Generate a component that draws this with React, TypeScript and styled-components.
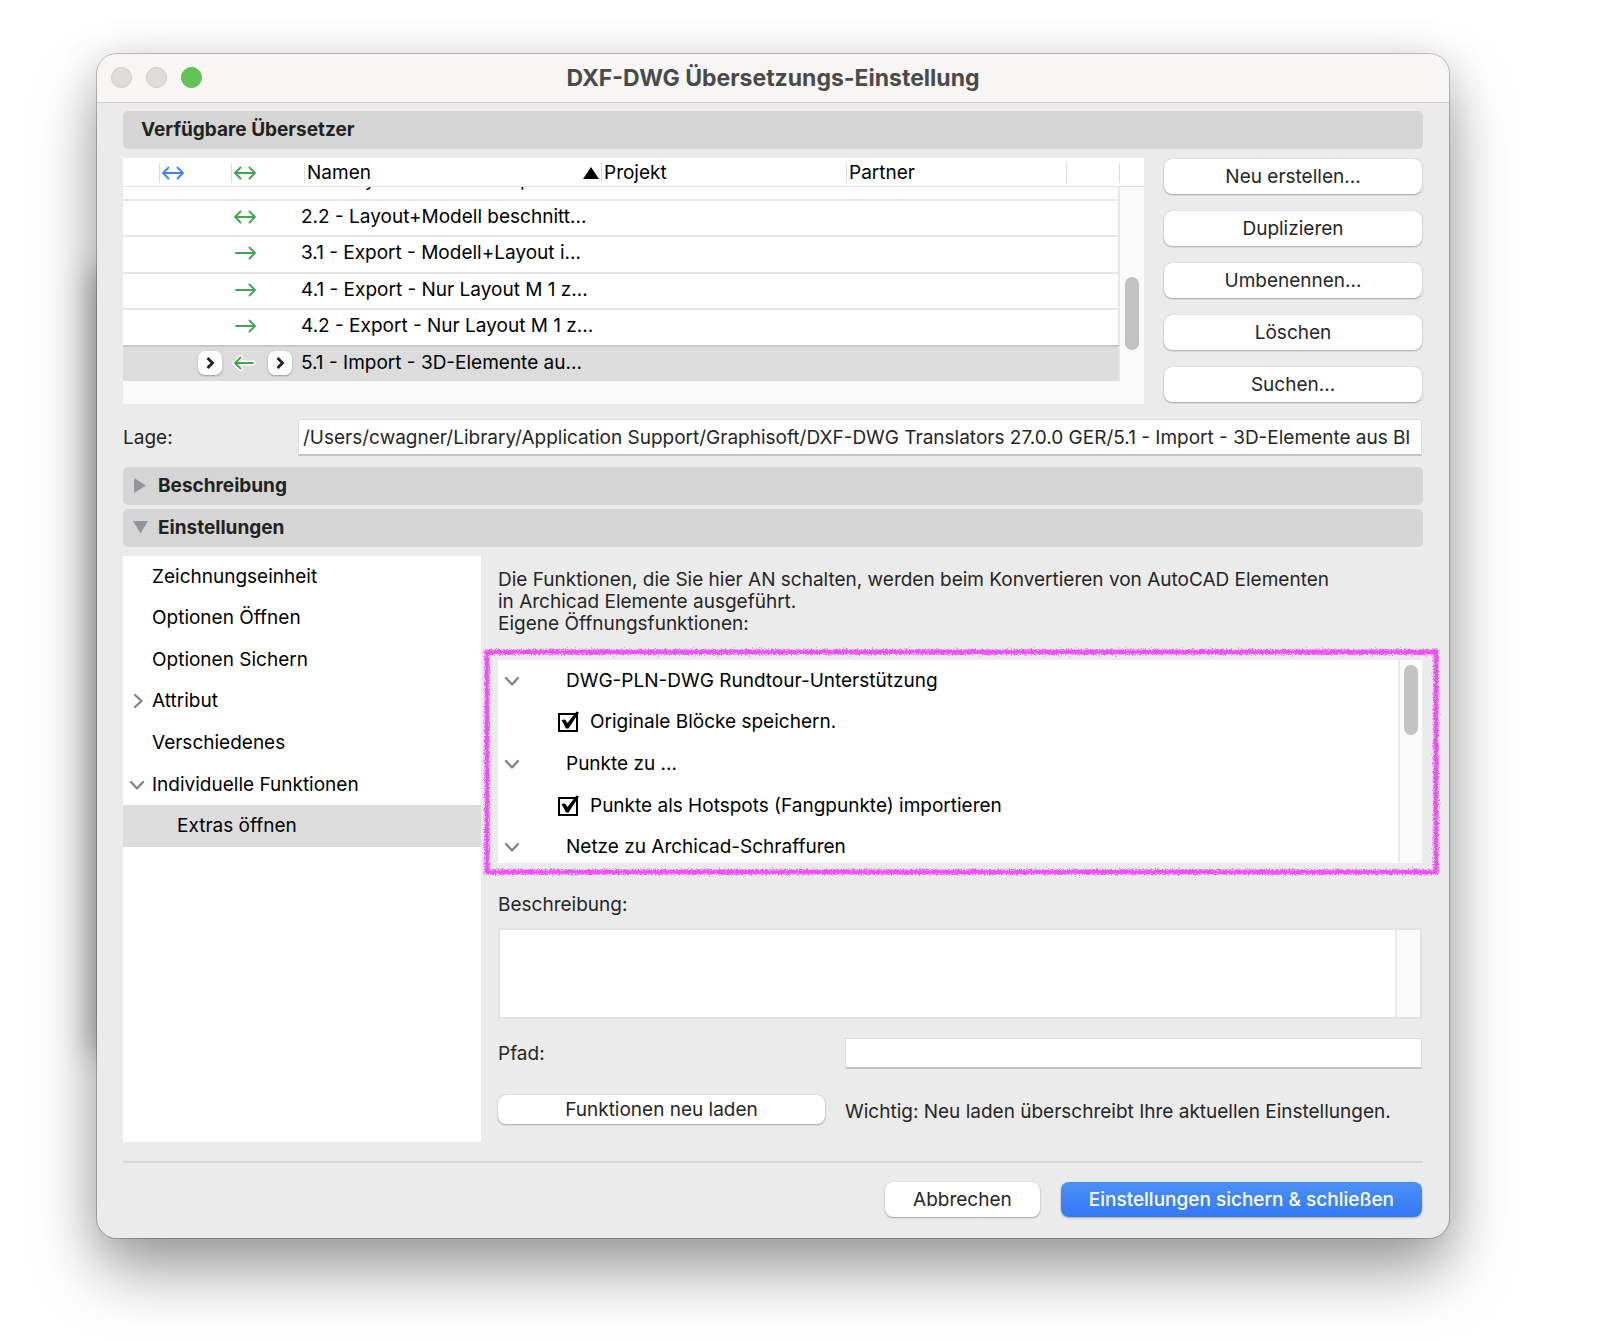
import React from "react";
import styled, { createGlobalStyle, css } from "styled-components";

const Global = createGlobalStyle`
  * { box-sizing: border-box; }
  body { margin: 0; background: #fff; font-family: Inter, "Liberation Sans", sans-serif; font-size: 19px; line-height: 22px; color: #262626; }
  button, input, textarea { font: inherit; color: inherit; margin: 0; }
  p { margin: 0; }
`;

const Desktop = styled.main`
  padding: 54px 151px 104px 97px;
`;

const Window = styled.section`
  display: flex;
  flex-direction: column;
  background: #ebebeb;
  border-radius: 20px;
  box-shadow:
    0 0 0 1px rgba(0, 0, 0, 0.22),
    0 34px 64px rgba(0, 0, 0, 0.36),
    0 4px 44px rgba(0, 0, 0, 0.12),
    -208px 16px 28px -200px rgba(0, 0, 0, 0.26);
`;

const TitleBar = styled.header`
  display: grid;
  grid-template-columns: 120px 1fr 120px;
  align-items: center;
  height: 49px;
  padding: 0 14px 1px;
  background: #f7f6f4;
  border-bottom: 1px solid #cfcfcf;
  border-radius: 20px 20px 0 0;
`;

const Lights = styled.div`
  display: flex;
  gap: 14px;
`;

const Light = styled.button<{ $on?: boolean }>`
  width: 21px;
  height: 21px;
  padding: 0;
  border-radius: 50%;
  border: 1px solid ${(p) => (p.$on ? "#58b94c" : "#cbcac9")};
  background: ${(p) => (p.$on ? "#61c554" : "#dddcdb")};
`;

const Title = styled.h1`
  margin: 0;
  font-size: 23px;
  line-height: 26px;
  font-weight: 700;
  text-align: center;
  white-space: nowrap;
  color: #4a4a4a;
`;

const Content = styled.div`
  display: flex;
  flex-direction: column;
  padding: 8px 26px 21px;
`;

const barStyle = css`
  display: flex;
  align-items: center;
  gap: 8px;
  width: 100%;
  height: 38px;
  margin: 0;
  border: 0;
  border-radius: 5px;
  background: #d5d5d5;
  font-size: 19px;
  font-weight: 700;
  color: #222;
`;

const SectionBar = styled.h2`
  ${barStyle}
  padding: 0 18px;
`;

const FoldBar = styled.button`
  ${barStyle}
  padding: 0 9px;
  text-align: left;
`;

const FoldBars = styled.div`
  display: grid;
  gap: 4px;
  margin: 11px 0 9px;
`;

const Translators = styled.div`
  display: grid;
  grid-template-columns: 1fr 258px;
  gap: 20px;
  padding-right: 1px;
  margin: 9px 0 15px;
`;

const TablePane = styled.div`
  height: 246px;
  overflow: hidden;
  display: grid;
  grid-template-columns: 1fr 24px;
  grid-template-rows: 29px 1fr;
  background: #fafafa;
`;

const Table = styled.table`
  display: block;
  grid-column: 1;
  grid-row: 1 / 3;
  color: #000;
`;

const THead = styled.thead`
  display: block;
  height: 29px;
  background: #fff;
  border-bottom: 1px solid #e4e4e4;
`;

const HeadRow = styled.tr`
  display: grid;
  grid-template-columns: 37px 72px 73px 297fr 245fr 220fr 53px;
  padding-top: 5px;
`;

const Th = styled.th`
  display: flex;
  align-items: center;
  justify-content: space-between;
  height: 20px;
  padding: 0 2px;
  border-right: 1px solid #dcdcdc;
  font-weight: 400;
  text-align: left;
`;

const TBody = styled.tbody`
  display: flex;
  flex-direction: column;
  justify-content: flex-end;
  height: 194px;
  overflow: hidden;
`;

const Row = styled.tr<{ $selected?: boolean }>`
  display: grid;
  flex: none;
  height: 18.8%;
  grid-template-columns: 75px 94px 1fr;
  border-top: 2px solid ${(p) => (p.$selected ? "#c8c8c8" : "#e6e6e6")};
  border-right: 2px solid #e6e6e6;
  background: ${(p) => (p.$selected ? "#dcdcdc" : "#fff")};
`;

const Td = styled.td<{ $icons?: boolean }>`
  display: flex;
  align-items: center;
  justify-content: ${(p) => (p.$icons ? "space-between" : "flex-start")};
  padding: 0 0 2px ${(p) => (p.$icons ? "0" : "9px")};
  white-space: nowrap;
`;

const Slot = styled.span`
  display: flex;
  width: 24px;
`;

const StepButton = styled.button`
  display: grid;
  place-items: center;
  width: 24px;
  height: 24px;
  padding: 0;
  border: 0;
  border-radius: 7px;
  background: #fff;
  box-shadow: 0 1px 2px rgba(0, 0, 0, 0.3);
  color: #222;
`;

const HeadFill = styled.div`
  background: #fff;
  border-bottom: 1px solid #e4e4e4;
`;

const ScrollTrack = styled.div<{ $top: number }>`
  display: flex;
  justify-content: center;
  align-items: flex-start;
  padding-top: ${(p) => p.$top}px;
  background: #fafafa;
`;

const Thumb = styled.span<{ $height: number }>`
  width: 14px;
  height: ${(p) => p.$height}px;
  border-radius: 7px;
  background: #c2c2c2;
`;

const Actions = styled.div`
  display: flex;
  flex-direction: column;
  gap: 17px;
  padding-top: 1px;
`;

const PushButton = styled.button<{ $primary?: boolean; $small?: boolean }>`
  height: ${(p) => (p.$small ? 29 : 35)}px;
  padding: 1px 28px 0;
  border: 0;
  border-radius: 8px;
  background: ${(p) => (p.$primary ? "linear-gradient(#4b91f8, #3378f6)" : "#fff")};
  box-shadow: 0 0 1px rgba(0, 0, 0, 0.25), 0 1px 2px rgba(0, 0, 0, 0.28);
  color: ${(p) => (p.$primary ? "#fff" : "#262626")};
  font-weight: ${(p) => (p.$primary ? 500 : 400)};
  white-space: nowrap;
`;

const LocationRow = styled.div`
  display: grid;
  grid-template-columns: 175px 1fr;
  align-items: center;
  padding-right: 1px;
`;

const TextInput = styled.input<{ $height: number }>`
  width: 100%;
  min-width: 0;
  height: ${(p) => p.$height}px;
  padding: 1px 0 0 4px;
  border: 1px solid #dedede;
  border-bottom: 2px solid #c4c4c4;
  border-radius: 0;
  background: #fff;
  outline: 0;
`;

const Settings = styled.div`
  display: grid;
  grid-template-columns: 358px 1fr;
  gap: 17px;
  padding-right: 1px;
`;

const Nav = styled.nav`
  height: 586px;
  background: #fff;
`;

const NavList = styled.ul`
  display: grid;
  grid-auto-rows: 1fr;
  height: 291px;
  margin: 0;
  padding: 0;
  list-style: none;
`;

const NavItem = styled.li<{ $selected?: boolean }>`
  display: flex;
  background: ${(p) => (p.$selected ? "#dcdcdc" : "transparent")};
`;

const NavLink = styled.a<{ $level: number }>`
  display: grid;
  grid-template-columns: 18px 1fr;
  gap: 6px;
  align-items: center;
  flex: 1;
  padding-left: ${(p) => 5 + p.$level * 25}px;
  color: #000;
  text-decoration: none;
`;

const NavFold = styled.span`
  display: flex;
`;

const Panel = styled.div`
  display: flex;
  flex-direction: column;
  align-items: stretch;
  padding-top: 13px;
`;

const Highlighted = styled.div`
  position: relative;
  margin: 25px 0 31px;
`;

const ListBox = styled.div`
  display: grid;
  grid-template-columns: 1fr 24px;
  height: 203px;
  overflow: hidden;
  background: #fff;
`;

const TrackCell = styled.div`
  display: grid;
  border-left: 2px solid #e9e9e9;
`;

const OptionList = styled.ul`
  display: grid;
  grid-auto-rows: 1fr;
  height: 208px;
  margin: 0;
  padding: 0;
  list-style: none;
  color: #000;
`;

const OptionGroup = styled.li`
  display: grid;
  grid-template-columns: 62px 1fr;
  gap: 6px;
  align-items: center;
`;

const Twist = styled.button`
  display: flex;
  justify-content: flex-start;
  padding: 0 0 0 5px;
  border: 0;
  background: none;
`;

const OptionItem = styled.li`
  display: flex;
  align-items: center;
  padding-left: 60px;
`;

const CheckLabel = styled.label`
  display: grid;
  grid-template-columns: 20px 1fr;
  gap: 12px;
  align-items: center;
`;

const CheckBox = styled.span`
  display: grid;
  height: 22px;
  & > * { grid-area: 1 / 1; }
`;

const CheckInput = styled.input`
  appearance: none;
  width: 20px;
  height: 22px;
`;

const CheckMark = styled.svg`
  pointer-events: none;
  overflow: visible;
  & path { visibility: hidden; }
  input:checked + & path { visibility: visible; }
`;

const Marker = styled.svg`
  position: absolute;
  left: -17px;
  top: -14px;
  width: calc(100% + 33px);
  height: calc(100% + 25px);
  overflow: visible;
  pointer-events: none;
`;

const FieldLabel = styled.label`
  display: block;
`;

const DescriptionBox = styled.div`
  display: grid;
  grid-template-columns: 1fr 25px;
  height: 91px;
  margin: 12px 0 19px;
  border: 2px solid #e2e2e2;
  background: #fff;
`;

const DescriptionArea = styled.textarea`
  border: 0;
  padding: 4px;
  resize: none;
  outline: 0;
  background: #fff;
`;

const PathGrid = styled.div`
  display: grid;
  grid-template-columns: 327px 1fr;
  column-gap: 20px;
  row-gap: 26px;
  align-items: center;
`;

const Note = styled.p`
  white-space: nowrap;
  padding-top: 4px;
`;

const Footer = styled.footer`
  display: flex;
  justify-content: flex-end;
  gap: 21px;
  margin-top: 19px;
  padding: 19px 1px 0 0;
  border-top: 2px solid #d6d6d6;
`;

type Direction = "both" | "out" | "in";

function Arrow({ dir, color = "#41a552", halo }: { dir: Direction; color?: string; halo?: boolean }) {
  const d =
    (dir === "out" ? "M2 8H20" : dir === "in" ? "M1 8H19" : "M1 8H21") +
    (dir !== "in" ? " M15.500 2.500L21 8L15.500 13.500" : "") +
    (dir !== "out" ? " M6.500 2.500L1 8L6.500 13.500" : "");
  return (
    <svg width="22" height="16" viewBox="0 0 22 16" fill="none" strokeLinecap="round" strokeLinejoin="round" overflow="visible" aria-hidden="true">
      {halo && <path d={d} stroke="#fff" strokeWidth="5" />}
      <path d={d} stroke={color} strokeWidth="1.9" />
    </svg>
  );
}

function Chevron({ open }: { open?: boolean }) {
  return (
    <svg width="18" height="18" viewBox="0 0 18 18" fill="none" stroke="#838383" strokeWidth="2.300" strokeLinecap="round" strokeLinejoin="round" aria-hidden="true">
      <path d={open ? "M3 6L9 12.500L15 6" : "M7 3L13.500 9L7 15"} />
    </svg>
  );
}

function StepIcon() {
  return (
    <svg width="14" height="14" viewBox="0 0 14 14" fill="none" stroke="currentColor" strokeWidth="2.800" strokeLinejoin="miter" aria-hidden="true">
      <path d="M4.500 2L9.500 7L4.500 12" />
    </svg>
  );
}

function FoldIcon({ open }: { open?: boolean }) {
  return (
    <svg width="18" height="16" viewBox="0 0 18 16" fill="#8f9698" aria-hidden="true">
      <path d={open ? "M1 1H16L8.500 13.500Z" : "M2 0V15L14 7.500Z"} />
    </svg>
  );
}

const rows: { name: string; dir: Direction; selected?: boolean }[] = [
  { name: "2.1 - Layout+Modell komplett...", dir: "both" },
  { name: "2.2 - Layout+Modell beschnitt...", dir: "both" },
  { name: "3.1 - Export - Modell+Layout i...", dir: "out" },
  { name: "4.1 - Export - Nur Layout M 1 z...", dir: "out" },
  { name: "4.2 - Export - Nur Layout M 1 z...", dir: "out" },
  { name: "5.1 - Import - 3D-Elemente au...", dir: "in", selected: true },
];

const nav: { label: string; level: number; fold?: "open" | "closed"; selected?: boolean }[] = [
  { label: "Zeichnungseinheit", level: 0 },
  { label: "Optionen Öffnen", level: 0 },
  { label: "Optionen Sichern", level: 0 },
  { label: "Attribut", level: 0, fold: "closed" },
  { label: "Verschiedenes", level: 0 },
  { label: "Individuelle Funktionen", level: 0, fold: "open" },
  { label: "Extras öffnen", level: 1, selected: true },
];

const options: { label: string; check?: boolean }[] = [
  { label: "DWG-PLN-DWG Rundtour-Unterstützung" },
  { label: "Originale Blöcke speichern.", check: true },
  { label: "Punkte zu ..." },
  { label: "Punkte als Hotspots (Fangpunkte) importieren", check: true },
  { label: "Netze zu Archicad-Schraffuren" },
];

const actions = ["Neu erstellen...", "Duplizieren", "Umbenennen...", "Löschen", "Suchen..."];

function TranslatorTable() {
  return (
    <TablePane>
      <Table>
        <THead>
          <HeadRow>
            <Th />
            <Th><Arrow dir="both" color="#3f83f7" /></Th>
            <Th><Arrow dir="both" /></Th>
            <Th>
              Namen
              <svg width="16" height="12" viewBox="0 0 16 12" aria-hidden="true"><path d="M8 0L16 12H0Z" /></svg>
            </Th>
            <Th>Projekt</Th>
            <Th>Partner</Th>
            <Th />
          </HeadRow>
        </THead>
        <TBody>
          {rows.map((r) => (
            <Row key={r.name} $selected={r.selected}>
              <Td />
              <Td $icons>
                <Slot>{r.selected && <StepButton aria-label="Zurück"><StepIcon /></StepButton>}</Slot>
                <Arrow dir={r.dir} halo={r.selected} />
                <Slot>{r.selected && <StepButton aria-label="Weiter"><StepIcon /></StepButton>}</Slot>
              </Td>
              <Td>{r.name}</Td>
            </Row>
          ))}
        </TBody>
      </Table>
      <HeadFill />
      <ScrollTrack $top={90}><Thumb $height={73} /></ScrollTrack>
    </TablePane>
  );
}

function MarkerFrame() {
  return (
    <Marker aria-hidden="true">
      <defs>
        <filter id="crayon" x="-2%" y="-5%" width="104%" height="110%">
          <feTurbulence type="fractalNoise" baseFrequency="0.7" numOctaves="2" seed="4" result="n" />
          <feDisplacementMap in="SourceGraphic" in2="n" scale="6" xChannelSelector="R" yChannelSelector="G" />
        </filter>
      </defs>
      <rect x="6" y="6" width="calc(100% - 8px)" height="calc(100% - 8px)" fill="none" stroke="#ee4ff8" strokeWidth="5" filter="url(#crayon)" />
    </Marker>
  );
}

export default function App() {
  return (
    <>
      <Global />
      <Desktop>
        <Window aria-labelledby="title">
          <TitleBar>
            <Lights>
              <Light aria-label="Schließen" />
              <Light aria-label="Minimieren" />
              <Light aria-label="Vergrößern" $on />
            </Lights>
            <Title id="title">DXF-DWG Übersetzungs-Einstellung</Title>
          </TitleBar>
          <Content>
            <SectionBar>Verfügbare Übersetzer</SectionBar>
            <Translators>
              <TranslatorTable />
              <Actions>
                {actions.map((a) => <PushButton key={a}>{a}</PushButton>)}
              </Actions>
            </Translators>
            <LocationRow>
              <FieldLabel htmlFor="lage">Lage:</FieldLabel>
              <TextInput
                id="lage"
                $height={37}
                readOnly
                value="/Users/cwagner/Library/Application Support/Graphisoft/DXF-DWG Translators 27.0.0 GER/5.1 - Import - 3D-Elemente aus Bl"
              />
            </LocationRow>
            <FoldBars>
              <FoldBar aria-expanded={false}><FoldIcon />Beschreibung</FoldBar>
              <FoldBar aria-expanded><FoldIcon open />Einstellungen</FoldBar>
            </FoldBars>
            <Settings>
              <Nav>
                <NavList>
                  {nav.map((n) => (
                    <NavItem key={n.label} $selected={n.selected}>
                      <NavLink href="#" $level={n.level}>
                        <NavFold>{n.fold && <Chevron open={n.fold === "open"} />}</NavFold>
                        {n.label}
                      </NavLink>
                    </NavItem>
                  ))}
                </NavList>
              </Nav>
              <Panel>
                <p>
                  Die Funktionen, die Sie hier AN schalten, werden beim Konvertieren von AutoCAD Elementen
                  <br />
                  in Archicad Elemente ausgeführt.
                </p>
                <p>Eigene Öffnungsfunktionen:</p>
                <Highlighted>
                  <ListBox>
                    <OptionList>
                      {options.map((o) =>
                        o.check ? (
                          <OptionItem key={o.label}>
                            <CheckLabel>
                              <CheckBox>
                                <CheckInput type="checkbox" defaultChecked />
                                <CheckMark width="21" height="22" viewBox="0 0 21 22" fill="none" stroke="#000" aria-hidden="true">
                                  <rect x="1" y="3" width="18" height="17" strokeWidth="2" />
                                  <path d="M3.500 9L7 8.500L9.500 12L18.500 0.500L21 1.500L10.500 17.500H8Z" fill="#000" stroke="none" />
                                </CheckMark>
                              </CheckBox>
                              {o.label}
                            </CheckLabel>
                          </OptionItem>
                        ) : (
                          <OptionGroup key={o.label}>
                            <Twist aria-label={o.label}><Chevron open /></Twist>
                            {o.label}
                          </OptionGroup>
                        )
                      )}
                    </OptionList>
                    <TrackCell>
                      <ScrollTrack $top={5}><Thumb $height={70} /></ScrollTrack>
                    </TrackCell>
                  </ListBox>
                  <MarkerFrame />
                </Highlighted>
                <FieldLabel htmlFor="beschreibung">Beschreibung:</FieldLabel>
                <DescriptionBox>
                  <DescriptionArea id="beschreibung" />
                  <TrackCell><ScrollTrack $top={0} /></TrackCell>
                </DescriptionBox>
                <PathGrid>
                  <FieldLabel htmlFor="pfad">Pfad:</FieldLabel>
                  <TextInput id="pfad" $height={31} />
                  <PushButton $small>Funktionen neu laden</PushButton>
                  <Note>Wichtig: Neu laden überschreibt Ihre aktuellen Einstellungen.</Note>
                </PathGrid>
              </Panel>
            </Settings>
            <Footer>
              <PushButton>Abbrechen</PushButton>
              <PushButton $primary>Einstellungen sichern &amp; schließen</PushButton>
            </Footer>
          </Content>
        </Window>
      </Desktop>
    </>
  );
}
